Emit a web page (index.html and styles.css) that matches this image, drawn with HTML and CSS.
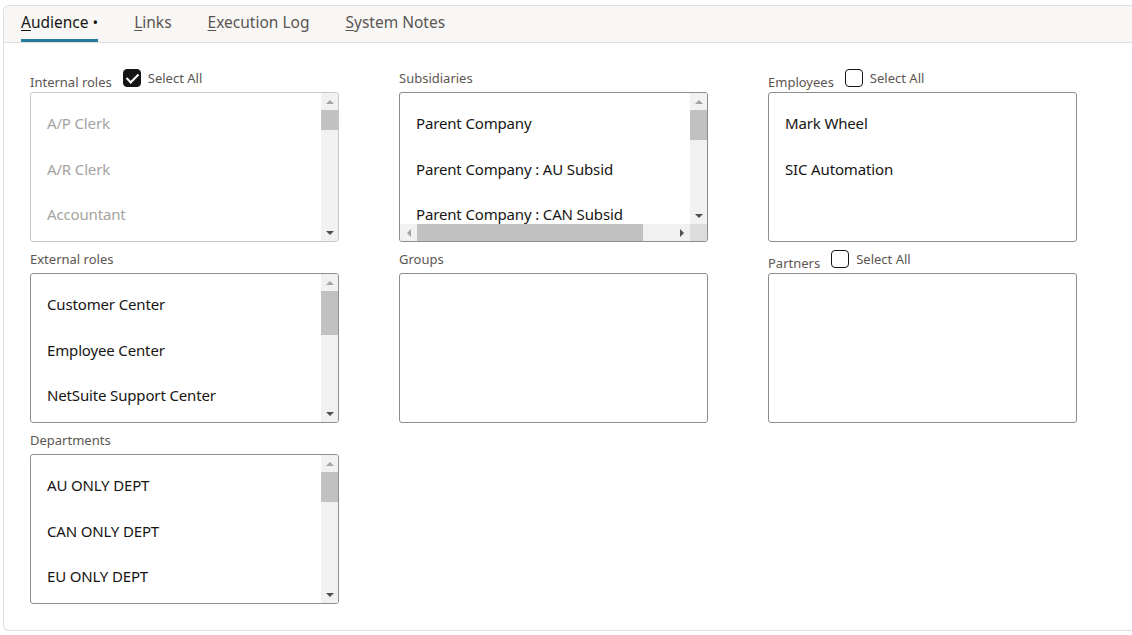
FILE: index.html
```html
<!DOCTYPE html>
<html lang="en">

<head>
    <meta charset="UTF-8">
    <meta name="viewport" content="width=device-width, initial-scale=1.0">
    <title>Audience</title>
    <link rel="stylesheet" href="styles.css">
</head>

<body>
    <div class="frame">
        <!-- tabs -->
        <nav class="tabs">
            <a class="tab active"><u>A</u>udience <span class="dot">•</span></a>
            <a class="tab"><u>L</u>inks</a>
            <a class="tab"><u>E</u>xecution Log</a>
            <a class="tab"><u>S</u>ystem Notes</a>
        </nav>

        <section class="panel">
            <div class="column">
                <div class="field">
                    <div class="head">
                        <span class="label low">Internal roles</span>
                        <span class="check checked"></span>
                        <span class="select-all">Select All</span>
                    </div>
                    <div class="box disabled">
                        <ul class="items">
                            <li>A/P Clerk</li>
                            <li>A/R Clerk</li>
                            <li>Accountant</li>
                        </ul>
                        <div class="vbar">
                            <span class="arrow up off"></span>
                            <div class="track"><span class="thumb t20"></span></div>
                            <span class="arrow down"></span>
                        </div>
                    </div>
                </div>
                <div class="field">
                    <div class="head">
                        <span class="label">External roles</span>
                    </div>
                    <div class="box">
                        <ul class="items">
                            <li>Customer Center</li>
                            <li>Employee Center</li>
                            <li>NetSuite Support Center</li>
                        </ul>
                        <div class="vbar">
                            <span class="arrow up off"></span>
                            <div class="track"><span class="thumb t44"></span></div>
                            <span class="arrow down"></span>
                        </div>
                    </div>
                </div>
                <div class="field">
                    <div class="head">
                        <span class="label">Departments</span>
                    </div>
                    <div class="box">
                        <ul class="items">
                            <li>AU ONLY DEPT</li>
                            <li>CAN ONLY DEPT</li>
                            <li>EU ONLY DEPT</li>
                        </ul>
                        <div class="vbar">
                            <span class="arrow up off"></span>
                            <div class="track"><span class="thumb t30"></span></div>
                            <span class="arrow down"></span>
                        </div>
                    </div>
                </div>
            </div>

            <div class="column">
                <div class="field">
                    <div class="head">
                        <span class="label">Subsidiaries</span>
                    </div>
                    <div class="box both">
                        <ul class="items">
                            <li>Parent Company</li>
                            <li>Parent Company : AU Subsid</li>
                            <li>Parent Company : CAN Subsid</li>
                        </ul>
                        <div class="vbar">
                            <span class="arrow up off"></span>
                            <div class="track"><span class="thumb t30"></span></div>
                            <span class="arrow down"></span>
                        </div>
                        <div class="hbar">
                            <span class="arrow left off"></span>
                            <div class="htrack"><span class="hthumb"></span></div>
                            <span class="arrow right"></span>
                        </div>
                        <span class="corner"></span>
                    </div>
                </div>
                <div class="field">
                    <div class="head">
                        <span class="label">Groups</span>
                    </div>
                    <div class="box"></div>
                </div>
            </div>

            <div class="column">
                <div class="field">
                    <div class="head">
                        <span class="label low">Employees</span>
                        <span class="check"></span>
                        <span class="select-all">Select All</span>
                    </div>
                    <div class="box">
                        <ul class="items">
                            <li>Mark Wheel</li>
                            <li>SIC Automation</li>
                        </ul>
                    </div>
                </div>
                <div class="field">
                    <div class="head">
                        <span class="label low">Partners</span>
                        <span class="check"></span>
                        <span class="select-all">Select All</span>
                    </div>
                    <div class="box"></div>
                </div>
            </div>
        </section>
    </div>
</body>

</html>
```

FILE: styles.css
```css
* {
    box-sizing: border-box;
}

body,
ul {
    margin: 0;
    padding: 0;
}

body {
    background-color: #fff;
    font-family: 'Noto Sans', 'Open Sans', sans-serif;
    color: #161513;
}

/* outer frame */
.frame {
    margin: 5px 0 0 3px;
    height: 626px;
    border: 1px solid #e0dfdd;
    border-right: none;
    border-radius: 6px 0 0 6px;
    overflow: hidden;
}

/* tabs */
.tabs {
    display: flex;
    gap: 36px;
    height: 37px;
    padding-left: 17px;
    background-color: #f8f7f5;
    border-bottom: 1px solid #dedcd9;
}

.tab {
    display: flex;
    align-items: center;
    height: 36px;
    padding-bottom: 2px;
    border-bottom: 3px solid transparent;
    font-size: 15.5px;
    color: #5a5551;
    cursor: pointer;
}

.tab u {
    text-underline-offset: 2px;
}

.tab.active {
    color: #161513;
    border-bottom-color: #227b98;
}

.dot {
    font-size: 15px;
    margin-left: 4px;
}

/* fields */
.panel {
    display: flex;
    gap: 60px;
    padding: 18px 0 0 26px;
}

.column {
    display: flex;
    flex-direction: column;
    width: 309px;
}

.head {
    display: flex;
    align-items: center;
    height: 31px;
    padding-top: 3px;
    font-size: 13px;
}

.label {
    color: #5b5652;
}

.label.low {
    margin-top: 8px;
}

.check {
    width: 18px;
    height: 18px;
    margin: 0 7px 0 11px;
    border: 1.5px solid #161513;
    border-radius: 4px;
    position: relative;
}

.check.checked {
    background-color: #161513;
}

.check.checked::after {
    content: "";
    position: absolute;
    left: 5px;
    top: 1px;
    width: 5px;
    height: 10px;
    border: solid #fff;
    border-width: 0 2px 2px 0;
    transform: rotate(45deg);
}

.select-all {
    color: #5b5652;
}

/* list boxes */
.box {
    display: flex;
    height: 150px;
    border: 1px solid #8f8d8a;
    border-radius: 3px;
    overflow: hidden;
}

.box.disabled {
    border-color: #c9c8c6;
}

.items {
    flex: 1;
    list-style: none;
    padding: 8px 0 0 16px;
    font-size: 15px;
    letter-spacing: -0.15px;
    white-space: nowrap;
    overflow: hidden;
}

.items li {
    height: 45.5px;
    line-height: 45px;
}

.disabled .items {
    color: #a5a3a1;
}

.box.both {
    display: grid;
    grid-template-columns: 1fr 17px;
    grid-template-rows: 1fr 17px;
}

/* fake scrollbars */
.vbar,
.hbar {
    display: flex;
    background-color: #f1f1f1;
}

.vbar {
    flex-direction: column;
    width: 17px;
}

.track,
.htrack {
    flex: 1;
    display: flex;
}

.track {
    flex-direction: column;
}

.thumb {
    width: 17px;
    background-color: #c1c1c1;
}

.t20 {
    height: 20px;
}

.t30 {
    height: 30px;
}

.t44 {
    height: 44px;
}

.hthumb {
    width: 226px;
    height: 17px;
    background-color: #c1c1c1;
}

.arrow {
    position: relative;
    width: 17px;
    height: 17px;
}

.arrow::after {
    content: "";
    position: absolute;
    left: 50%;
    top: 50%;
    transform: translate(-50%, -50%);
    border: 4px solid transparent;
}

.arrow.up::after {
    border-top: none;
    border-bottom-color: #505050;
}

.arrow.down::after {
    border-bottom: none;
    border-top-color: #505050;
}

.arrow.left::after {
    border-left: none;
    border-right-color: #505050;
}

.arrow.right::after {
    border-right: none;
    border-left-color: #505050;
}

.arrow.up.off::after {
    border-bottom-color: #a3a3a3;
}

.arrow.left.off::after {
    border-right-color: #a3a3a3;
}

.corner {
    background-color: #dcdcdc;
}
```
